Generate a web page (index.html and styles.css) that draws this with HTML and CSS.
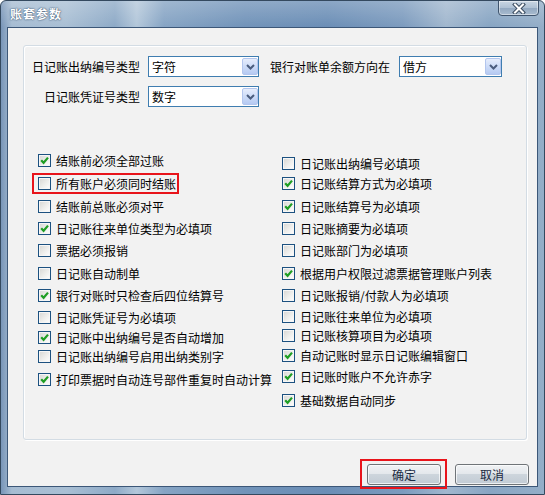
FILE: index.html
```html
<!DOCTYPE html>
<html lang="zh-CN">
<head>
    <meta charset="UTF-8">
    <title>账套参数</title>
    <link rel="stylesheet" href="styles.css">
</head>
<body>

    <div class="window">
        <div class="titlebar">
            <span class="title">账套参数</span>
            <span class="close">
                <svg width="14" height="11" viewBox="0 0 14 11">
                    <path d="M3 1.5 L11 9.5 M11 1.5 L3 9.5" stroke="#3b4c60" stroke-width="4" stroke-linecap="square"/>
                    <path d="M3 1.5 L11 9.5 M11 1.5 L3 9.5" stroke="#fff" stroke-width="2" stroke-linecap="square"/>
                </svg>
            </span>
        </div>

        <div class="client">
            <div class="group">
                <div class="fields">
                    <label class="field-label">日记账出纳编号类型</label>
                    <div class="combo"><span>字符</span><span class="drop"><svg width="9" height="6" viewBox="0 0 9 6"><path d="M1 1 L4.5 4.5 L8 1" stroke="#4b5d7e" stroke-width="2" fill="none"/></svg></span></div>
                    <label class="field-label wide">银行对账单余额方向在</label>
                    <div class="combo"><span>借方</span><span class="drop"><svg width="9" height="6" viewBox="0 0 9 6"><path d="M1 1 L4.5 4.5 L8 1" stroke="#4b5d7e" stroke-width="2" fill="none"/></svg></span></div>

                    <label class="field-label">日记账凭证号类型</label>
                    <div class="combo"><span>数字</span><span class="drop"><svg width="9" height="6" viewBox="0 0 9 6"><path d="M1 1 L4.5 4.5 L8 1" stroke="#4b5d7e" stroke-width="2" fill="none"/></svg></span></div>
                </div>

                <div class="options">
                    <div class="col">
                        <div class="row"><span class="cb on"><svg viewBox="0 0 11 11"><path d="M2.2 5.2 L4.6 7.8 L9 2.6" stroke="#1f9e24" stroke-width="2.2" fill="none"/></svg></span>结账前必须全部过账</div>
                        <div class="row m6 marked"><span class="cb"></span>所有账户必须同时结账</div>
                        <div class="row m6"><span class="cb"></span>结账前总账必须对平</div>
                        <div class="row"><span class="cb on"><svg viewBox="0 0 11 11"><path d="M2.2 5.2 L4.6 7.8 L9 2.6" stroke="#1f9e24" stroke-width="2.2" fill="none"/></svg></span>日记账往来单位类型为必填项</div>
                        <div class="row"><span class="cb"></span>票据必须报销</div>
                        <div class="row m6"><span class="cb"></span>日记账自动制单</div>
                        <div class="row"><span class="cb on"><svg viewBox="0 0 11 11"><path d="M2.2 5.2 L4.6 7.8 L9 2.6" stroke="#1f9e24" stroke-width="2.2" fill="none"/></svg></span>银行对账时只检查后四位结算号</div>
                        <div class="row"><span class="cb"></span>日记账凭证号为必填项</div>
                        <div class="row m3"><span class="cb on"><svg viewBox="0 0 11 11"><path d="M2.2 5.2 L4.6 7.8 L9 2.6" stroke="#1f9e24" stroke-width="2.2" fill="none"/></svg></span>日记账中出纳编号是否自动增加</div>
                        <div class="row m2"><span class="cb"></span>日记账出纳编号启用出纳类别字</div>
                        <div class="row m6"><span class="cb on"><svg viewBox="0 0 11 11"><path d="M2.2 5.2 L4.6 7.8 L9 2.6" stroke="#1f9e24" stroke-width="2.2" fill="none"/></svg></span>打印票据时自动连号部件重复时自动计算</div>
                    </div>
                    <div class="col right">
                        <div class="row"><span class="cb"></span>日记账出纳编号必填项</div>
                        <div class="row m3"><span class="cb on"><svg viewBox="0 0 11 11"><path d="M2.2 5.2 L4.6 7.8 L9 2.6" stroke="#1f9e24" stroke-width="2.2" fill="none"/></svg></span>日记账结算方式为必填项</div>
                        <div class="row m6"><span class="cb on"><svg viewBox="0 0 11 11"><path d="M2.2 5.2 L4.6 7.8 L9 2.6" stroke="#1f9e24" stroke-width="2.2" fill="none"/></svg></span>日记账结算号为必填项</div>
                        <div class="row"><span class="cb"></span>日记账摘要为必填项</div>
                        <div class="row"><span class="cb"></span>日记账部门为必填项</div>
                        <div class="row m6"><span class="cb on"><svg viewBox="0 0 11 11"><path d="M2.2 5.2 L4.6 7.8 L9 2.6" stroke="#1f9e24" stroke-width="2.2" fill="none"/></svg></span>根据用户权限过滤票据管理账户列表</div>
                        <div class="row"><span class="cb"></span>日记账报销/付款人为必填项</div>
                        <div class="row m4"><span class="cb"></span>日记账往来单位为必填项</div>
                        <div class="row m2"><span class="cb"></span>日记账核算项目为必填项</div>
                        <div class="row m3"><span class="cb on"><svg viewBox="0 0 11 11"><path d="M2.2 5.2 L4.6 7.8 L9 2.6" stroke="#1f9e24" stroke-width="2.2" fill="none"/></svg></span>自动记账时显示日记账编辑窗口</div>
                        <div class="row m4"><span class="cb on"><svg viewBox="0 0 11 11"><path d="M2.2 5.2 L4.6 7.8 L9 2.6" stroke="#1f9e24" stroke-width="2.2" fill="none"/></svg></span>日记账时账户不允许赤字</div>
                        <div class="row m7"><span class="cb on"><svg viewBox="0 0 11 11"><path d="M2.2 5.2 L4.6 7.8 L9 2.6" stroke="#1f9e24" stroke-width="2.2" fill="none"/></svg></span>基础数据自动同步</div>
                    </div>
                </div>
            </div>

            <div class="actions">
                <button class="btn marked-btn">确定</button>
                <button class="btn">取消</button>
            </div>
        </div>
    </div>

</body>
</html>
```

FILE: styles.css
```css
body {
    margin: 0;
    font-family: "Noto Sans CJK SC", "Noto Sans", sans-serif;
    font-size: 12px;
    color: #000;
    background: #fff;
}
.window {
    box-sizing: border-box;
    width: 545px;
    height: 495px;
    border: 1px solid #34495f;
    border-radius: 6px 6px 0 0;
    background:
        linear-gradient(180deg, rgba(255, 255, 255, 0.22), rgba(255, 255, 255, 0) 26px),
        linear-gradient(90deg, #7895b8 0%, #a6bcd2 2%, #a9bfd4 12%, #8eaac7 21%, #b3c7da 25%, #86a4c4 30%, #7193b9 45%, #6b8eb6 60%, #7c9bbe 74%, #a1b7ce 82%, #88a5c3 90%, #94aec8 100%);
    overflow: hidden;
}
.titlebar {
    height: 26px;
    display: flex;
    justify-content: space-between;
    align-items: flex-start;
}
.title {
    margin: 6px 0 0 9px;
    color: #fff;
    font-weight: bold;
    letter-spacing: 1px;
    line-height: 14px;
    text-shadow: 0 0 2px #3b5573, 0 0 1px #3b5573;
}
.close {
    width: 41px;
    height: 16px;
    margin-right: 5px;
    margin-top: -1px;
    box-sizing: border-box;
    border: 1px solid #3f546d;
    border-radius: 0 0 4px 4px;
    background: linear-gradient(180deg, #c9d6e3 0%, #afc1d4 48%, #93a9c1 52%, #a8bbcf 100%);
    box-shadow: inset 0 0 0 1px rgba(255, 255, 255, 0.45);
    display: flex;
    align-items: center;
    justify-content: center;
}
.client {
    box-sizing: border-box;
    width: 531px;
    height: 460px;
    margin-left: 6px;
    border: 1px solid #3c5778;
    background: #f2f2f2;
    padding-top: 17px;
}
.group {
    box-sizing: border-box;
    width: 504px;
    height: 395px;
    margin-left: 15px;
    border: 1px solid #d3dce4;
    border-radius: 3px;
    box-shadow: inset 1px 1px 0 #fff, 1px 1px 0 #fff;
    padding-top: 10px;
}
.fields {
    display: grid;
    grid-template-columns: 124px 111px 140px 103px;
    grid-auto-rows: 21px;
    row-gap: 9px;
}
.field-label {
    display: flex;
    align-items: center;
    justify-content: flex-end;
    padding-right: 8px;
    white-space: nowrap;
}
.field-label.wide {
    padding-right: 9px;
}
.combo {
    box-sizing: border-box;
    border: 1px solid #3f7db0;
    background: #fff;
    display: flex;
    align-items: center;
    justify-content: space-between;
    padding-left: 3px;
}
.drop {
    width: 16px;
    height: 17px;
    margin-right: 0;
    box-sizing: border-box;
    border: 1px solid #b3c6ee;
    border-radius: 2px;
    background: linear-gradient(180deg, #e6edfc 0%, #cddcf8 50%, #b6caf2 100%);
    display: flex;
    align-items: center;
    justify-content: center;
}
.options {
    display: flex;
    margin-top: 45px;
    padding-left: 14px;
}
.col {
    width: 255px;
}
.col.right {
    padding-top: 3px;
}
.row {
    height: 17px;
    display: flex;
    align-items: center;
    gap: 5px;
    margin-top: 5px;
    white-space: nowrap;
}
.row:first-child {
    margin-top: 0;
}
.row.m2 { margin-top: 2px; }
.row.m3 { margin-top: 3px; }
.row.m4 { margin-top: 4px; }
.row.m6 { margin-top: 6px; }
.row.m7 { margin-top: 7px; }
.cb {
    box-sizing: border-box;
    width: 13px;
    height: 13px;
    flex: none;
    border: 1px solid #1c5180;
    background: linear-gradient(135deg, #d6d6d3 0%, #eeeeec 55%, #ffffff 100%);
    box-shadow: inset 0 0 0 1px #f6f6f6;
}
.cb svg {
    display: block;
    width: 11px;
    height: 11px;
}
.marked {
    width: max-content;
    position: relative;
}
.marked::after {
    content: "";
    position: absolute;
    left: -6px;
    right: -3px;
    top: -2px;
    bottom: -2px;
    border: 2px solid #e8141b;
}
.actions {
    display: flex;
    justify-content: flex-end;
    gap: 14px;
    margin-top: 24px;
    padding-right: 8px;
}
.btn {
    position: relative;
    width: 74px;
    height: 21px;
    padding: 0;
    border: 1px solid #6f7478;
    border-radius: 3px;
    background: linear-gradient(180deg, #f0f2f4 0%, #e4e8ec 45%, #cdd5dc 50%, #c2cbd4 100%);
    box-shadow: inset 0 0 0 1px rgba(255, 255, 255, 0.7);
    font-family: "Noto Sans CJK SC", "Noto Sans", sans-serif;
    font-size: 12px;
    color: #1b2b44;
}
.marked-btn::after {
    content: "";
    position: absolute;
    left: -8px;
    right: -7px;
    top: -6px;
    bottom: -5px;
    border: 2px solid #e8141b;
}
```
